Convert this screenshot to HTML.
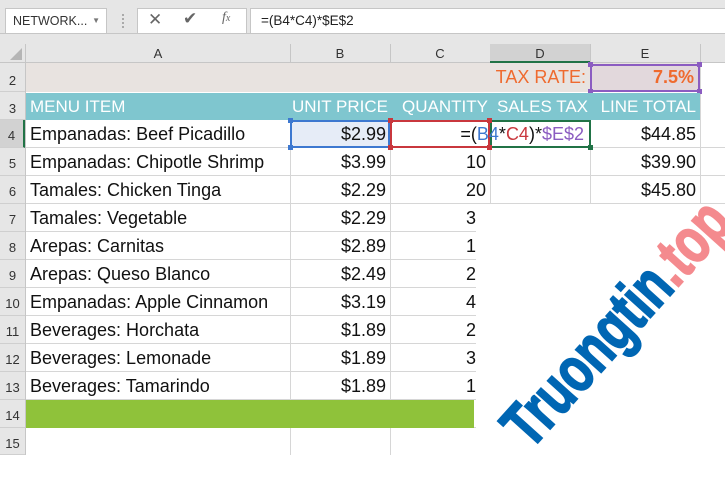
<!DOCTYPE html>
<html><head><style>
*{margin:0;padding:0;box-sizing:border-box}
body{width:725px;height:455px;overflow:hidden;background:#fff;font-family:"Liberation Sans",sans-serif;position:relative}
.a{position:absolute}
.tb{background:#e6e6e6}
.cell{position:absolute;height:28px;line-height:28px;font-size:18px;color:#111;white-space:nowrap;overflow:hidden}
.r{text-align:right;padding-right:4px}
.l{padding-left:4px}
.h{font-size:17px}
.rh{position:absolute;left:0;width:25px;font-size:13px;color:#333;text-align:center;background:#e6e6e6;border-bottom:1px solid #cfcfcf}
.hl{position:absolute;height:1px;background:#d6d6d6}
.vl{position:absolute;width:1px;background:#d6d6d6}
</style></head><body>
<div class="a tb" style="left:0;top:0;width:725px;height:44px"></div>
<div class="a" style="left:5px;top:8px;width:102px;height:26px;background:#fff;border:1px solid #c6c6c6;font-size:12.5px;line-height:24px;padding-left:7px;color:#333">NETWORK...<span style="position:absolute;right:6px;top:0;font-size:8px;color:#777">▼</span></div>
<div class="a" style="left:122px;top:14px;width:2px;height:14px;border-left:2px dotted #aaa"></div>
<div class="a" style="left:137px;top:8px;width:110px;height:26px;background:#fff;border:1px solid #c6c6c6"></div>
<div class="a" style="left:148px;top:10px;font-size:17px;color:#666">✕</div>
<div class="a" style="left:183px;top:9px;font-size:17px;color:#666">✔</div>
<div class="a" style="left:222px;top:10px;font-size:14px;color:#666;font-family:'Liberation Serif',serif;font-style:italic">f<span style="font-size:10px">x</span></div>
<div class="a" style="left:250px;top:8px;width:475px;height:26px;background:#fff;border:1px solid #c6c6c6;border-right:none;font-size:13.5px;line-height:24px;padding-left:10px;color:#222">=(B4*C4)*$E$2</div>
<div class="a" style="left:0;top:33px;width:725px;height:1px;background:#c6c6c6"></div>
<div class="a tb" style="left:0;top:44px;width:725px;height:19px;border-bottom:1px solid #c6c6c6"></div>
<div class="a" style="left:10px;top:48px;width:0;height:0;border-left:12px solid transparent;border-bottom:12px solid #b5b5b5"></div>
<div class="a" style="left:290px;top:44px;width:1px;height:19px;background:#c6c6c6"></div>
<div class="a" style="left:390px;top:44px;width:1px;height:19px;background:#c6c6c6"></div>
<div class="a" style="left:490px;top:44px;width:100px;height:19px;background:#d2d2d2;border-bottom:2px solid #217346"></div>
<div class="a" style="left:590px;top:44px;width:1px;height:19px;background:#c6c6c6"></div>
<div class="a" style="left:700px;top:44px;width:1px;height:19px;background:#c6c6c6"></div>
<div class="a" style="left:25px;top:44px;width:1px;height:19px;background:#c6c6c6"></div>
<div class="a" style="left:26px;top:46px;width:264px;text-align:center;font-size:13px;color:#333">A</div>
<div class="a" style="left:290px;top:46px;width:100px;text-align:center;font-size:13px;color:#333">B</div>
<div class="a" style="left:390px;top:46px;width:100px;text-align:center;font-size:13px;color:#333">C</div>
<div class="a" style="left:490px;top:46px;width:100px;text-align:center;font-size:13px;color:#333">D</div>
<div class="a" style="left:590px;top:46px;width:110px;text-align:center;font-size:13px;color:#333">E</div>
<div class="rh" style="top:63px;height:29px;line-height:36px">2</div>
<div class="rh" style="top:92px;height:28px;line-height:34px">3</div>
<div class="rh" style="top:120px;height:28px;line-height:32px;background:#d2d2d2;border-right:2px solid #217346">4</div>
<div class="rh" style="top:148px;height:28px;line-height:32px">5</div>
<div class="rh" style="top:176px;height:28px;line-height:32px">6</div>
<div class="rh" style="top:204px;height:28px;line-height:32px">7</div>
<div class="rh" style="top:232px;height:28px;line-height:32px">8</div>
<div class="rh" style="top:260px;height:28px;line-height:32px">9</div>
<div class="rh" style="top:288px;height:28px;line-height:32px">10</div>
<div class="rh" style="top:316px;height:28px;line-height:32px">11</div>
<div class="rh" style="top:344px;height:28px;line-height:32px">12</div>
<div class="rh" style="top:372px;height:28px;line-height:32px">13</div>
<div class="rh" style="top:400px;height:28px;line-height:32px">14</div>
<div class="rh" style="top:428px;height:27px;line-height:32px">15</div>
<div class="a" style="left:25px;top:63px;width:1px;height:392px;background:#c6c6c6"></div>
<div class="vl" style="left:290px;top:120px;height:335px"></div>
<div class="vl" style="left:390px;top:120px;height:335px"></div>
<div class="vl" style="left:490px;top:120px;height:335px"></div>
<div class="vl" style="left:590px;top:120px;height:335px"></div>
<div class="vl" style="left:700px;top:63px;height:392px"></div>
<div class="hl" style="left:26px;top:147px;width:699px"></div>
<div class="hl" style="left:26px;top:175px;width:699px"></div>
<div class="hl" style="left:26px;top:203px;width:699px"></div>
<div class="hl" style="left:26px;top:231px;width:699px"></div>
<div class="hl" style="left:26px;top:259px;width:699px"></div>
<div class="hl" style="left:26px;top:287px;width:699px"></div>
<div class="hl" style="left:26px;top:315px;width:699px"></div>
<div class="hl" style="left:26px;top:343px;width:699px"></div>
<div class="hl" style="left:26px;top:371px;width:699px"></div>
<div class="hl" style="left:26px;top:399px;width:699px"></div>
<div class="hl" style="left:26px;top:427px;width:699px"></div>
<div class="a" style="left:26px;top:63px;width:674px;height:29px;background:#e8e3e0"></div>
<div class="a" style="left:590px;top:64px;width:110px;height:28px;background:#e2d8dc"></div>
<div class="cell r" style="left:390px;top:63px;width:200px;height:29px;line-height:29px;color:#ef6a2e">TAX RATE:</div>
<div class="cell r" style="left:590px;top:63px;width:110px;height:29px;line-height:29px;color:#ef6a2e;font-weight:bold;padding-right:6px">7.5%</div>
<div class="a" style="left:590px;top:64px;width:110px;height:28px;border:2px solid #8b5cc1"></div>
<div class="a" style="left:588px;top:62px;width:5px;height:5px;background:#8b5cc1"></div>
<div class="a" style="left:697px;top:62px;width:5px;height:5px;background:#8b5cc1"></div>
<div class="a" style="left:588px;top:89px;width:5px;height:5px;background:#8b5cc1"></div>
<div class="a" style="left:697px;top:89px;width:5px;height:5px;background:#8b5cc1"></div>
<div class="a" style="left:26px;top:93px;width:674px;height:27px;background:#7fc6cf"></div>
<div class="cell l h" style="left:26px;top:93px;width:264px;height:27px;line-height:27px;color:#fff">MENU ITEM</div>
<div class="cell r h" style="left:290px;top:93px;width:100px;height:27px;line-height:27px;color:#fff;padding-right:2px">UNIT PRICE</div>
<div class="cell r h" style="left:390px;top:93px;width:100px;height:27px;line-height:27px;color:#fff;padding-right:2px">QUANTITY</div>
<div class="cell r h" style="left:490px;top:93px;width:100px;height:27px;line-height:27px;color:#fff;padding-right:2px">SALES TAX</div>
<div class="cell r h" style="left:590px;top:93px;width:110px;height:27px;line-height:27px;color:#fff">LINE TOTAL</div>
<div class="a" style="left:290px;top:120px;width:100px;height:28px;background:#e6ecf7;border:2px solid #3d78d0"></div>
<div class="a" style="left:390px;top:120px;width:100px;height:28px;border:2px solid #c9373d"></div>
<div class="a" style="left:490px;top:120px;width:101px;height:28px;border:2px solid #217346"></div>
<div class="cell l" style="left:26px;top:120px;width:264px">Empanadas: Beef Picadillo</div>
<div class="cell r" style="left:290px;top:120px;width:100px">$2.99</div>
<div class="cell r" style="left:390px;top:120px;width:200px;padding-right:6px">=(<span style="color:#3d78d0">B4</span>*<span style="color:#c9373d">C4</span>)*<span style="color:#8b5cc1">$E$2</span></div>
<div class="cell r" style="left:590px;top:120px;width:110px">$44.85</div>
<div class="a" style="left:288px;top:118px;width:5px;height:5px;background:#3d78d0"></div>
<div class="a" style="left:288px;top:145px;width:5px;height:5px;background:#3d78d0"></div>
<div class="a" style="left:388px;top:118px;width:5px;height:5px;background:#c9373d"></div>
<div class="a" style="left:487px;top:118px;width:5px;height:5px;background:#c9373d"></div>
<div class="a" style="left:388px;top:145px;width:5px;height:5px;background:#c9373d"></div>
<div class="a" style="left:487px;top:145px;width:5px;height:5px;background:#c9373d"></div>
<div class="a" style="left:588px;top:145px;width:5px;height:5px;background:#217346"></div>
<div class="cell l" style="left:26px;top:148px;width:264px">Empanadas: Chipotle Shrimp</div>
<div class="cell r" style="left:290px;top:148px;width:100px">$3.99</div>
<div class="cell r" style="left:390px;top:148px;width:100px">10</div>
<div class="cell r" style="left:590px;top:148px;width:110px">$39.90</div>
<div class="cell l" style="left:26px;top:176px;width:264px">Tamales: Chicken Tinga</div>
<div class="cell r" style="left:290px;top:176px;width:100px">$2.29</div>
<div class="cell r" style="left:390px;top:176px;width:100px">20</div>
<div class="cell r" style="left:590px;top:176px;width:110px">$45.80</div>
<div class="cell l" style="left:26px;top:204px;width:264px">Tamales: Vegetable</div>
<div class="cell r" style="left:290px;top:204px;width:100px">$2.29</div>
<div class="cell l" style="left:26px;top:232px;width:264px">Arepas: Carnitas</div>
<div class="cell r" style="left:290px;top:232px;width:100px">$2.89</div>
<div class="cell l" style="left:26px;top:260px;width:264px">Arepas: Queso Blanco</div>
<div class="cell r" style="left:290px;top:260px;width:100px">$2.49</div>
<div class="cell l" style="left:26px;top:288px;width:264px">Empanadas: Apple Cinnamon</div>
<div class="cell r" style="left:290px;top:288px;width:100px">$3.19</div>
<div class="cell l" style="left:26px;top:316px;width:264px">Beverages: Horchata</div>
<div class="cell r" style="left:290px;top:316px;width:100px">$1.89</div>
<div class="cell l" style="left:26px;top:344px;width:264px">Beverages: Lemonade</div>
<div class="cell r" style="left:290px;top:344px;width:100px">$1.89</div>
<div class="cell l" style="left:26px;top:372px;width:264px">Beverages: Tamarindo</div>
<div class="cell r" style="left:290px;top:372px;width:100px">$1.89</div>
<div class="a" style="left:476px;top:204px;width:249px;height:251px;background:#fff"></div>
<div class="cell r" style="left:390px;top:204px;width:90px">3</div>
<div class="cell r" style="left:390px;top:232px;width:90px">1</div>
<div class="cell r" style="left:390px;top:260px;width:90px">2</div>
<div class="cell r" style="left:390px;top:288px;width:90px">4</div>
<div class="cell r" style="left:390px;top:316px;width:90px">2</div>
<div class="cell r" style="left:390px;top:344px;width:90px">3</div>
<div class="cell r" style="left:390px;top:372px;width:90px">1</div>
<div class="a" style="left:26px;top:400px;width:448px;height:28px;background:#8fc23a"></div>
<div class="a" style="left:415px;top:300px;width:380px;height:70px;transform:rotate(-48deg);transform-origin:center;font-size:64px;font-weight:bold;line-height:70px;text-align:center;color:#0066b3;white-space:nowrap;-webkit-text-stroke:2px #0066b3"><span style="display:inline-block;transform:scaleX(0.74)">Truongtin<span style="color:#f48a8e;-webkit-text-stroke:2px #f48a8e">.top</span></span></div>
</body></html>
